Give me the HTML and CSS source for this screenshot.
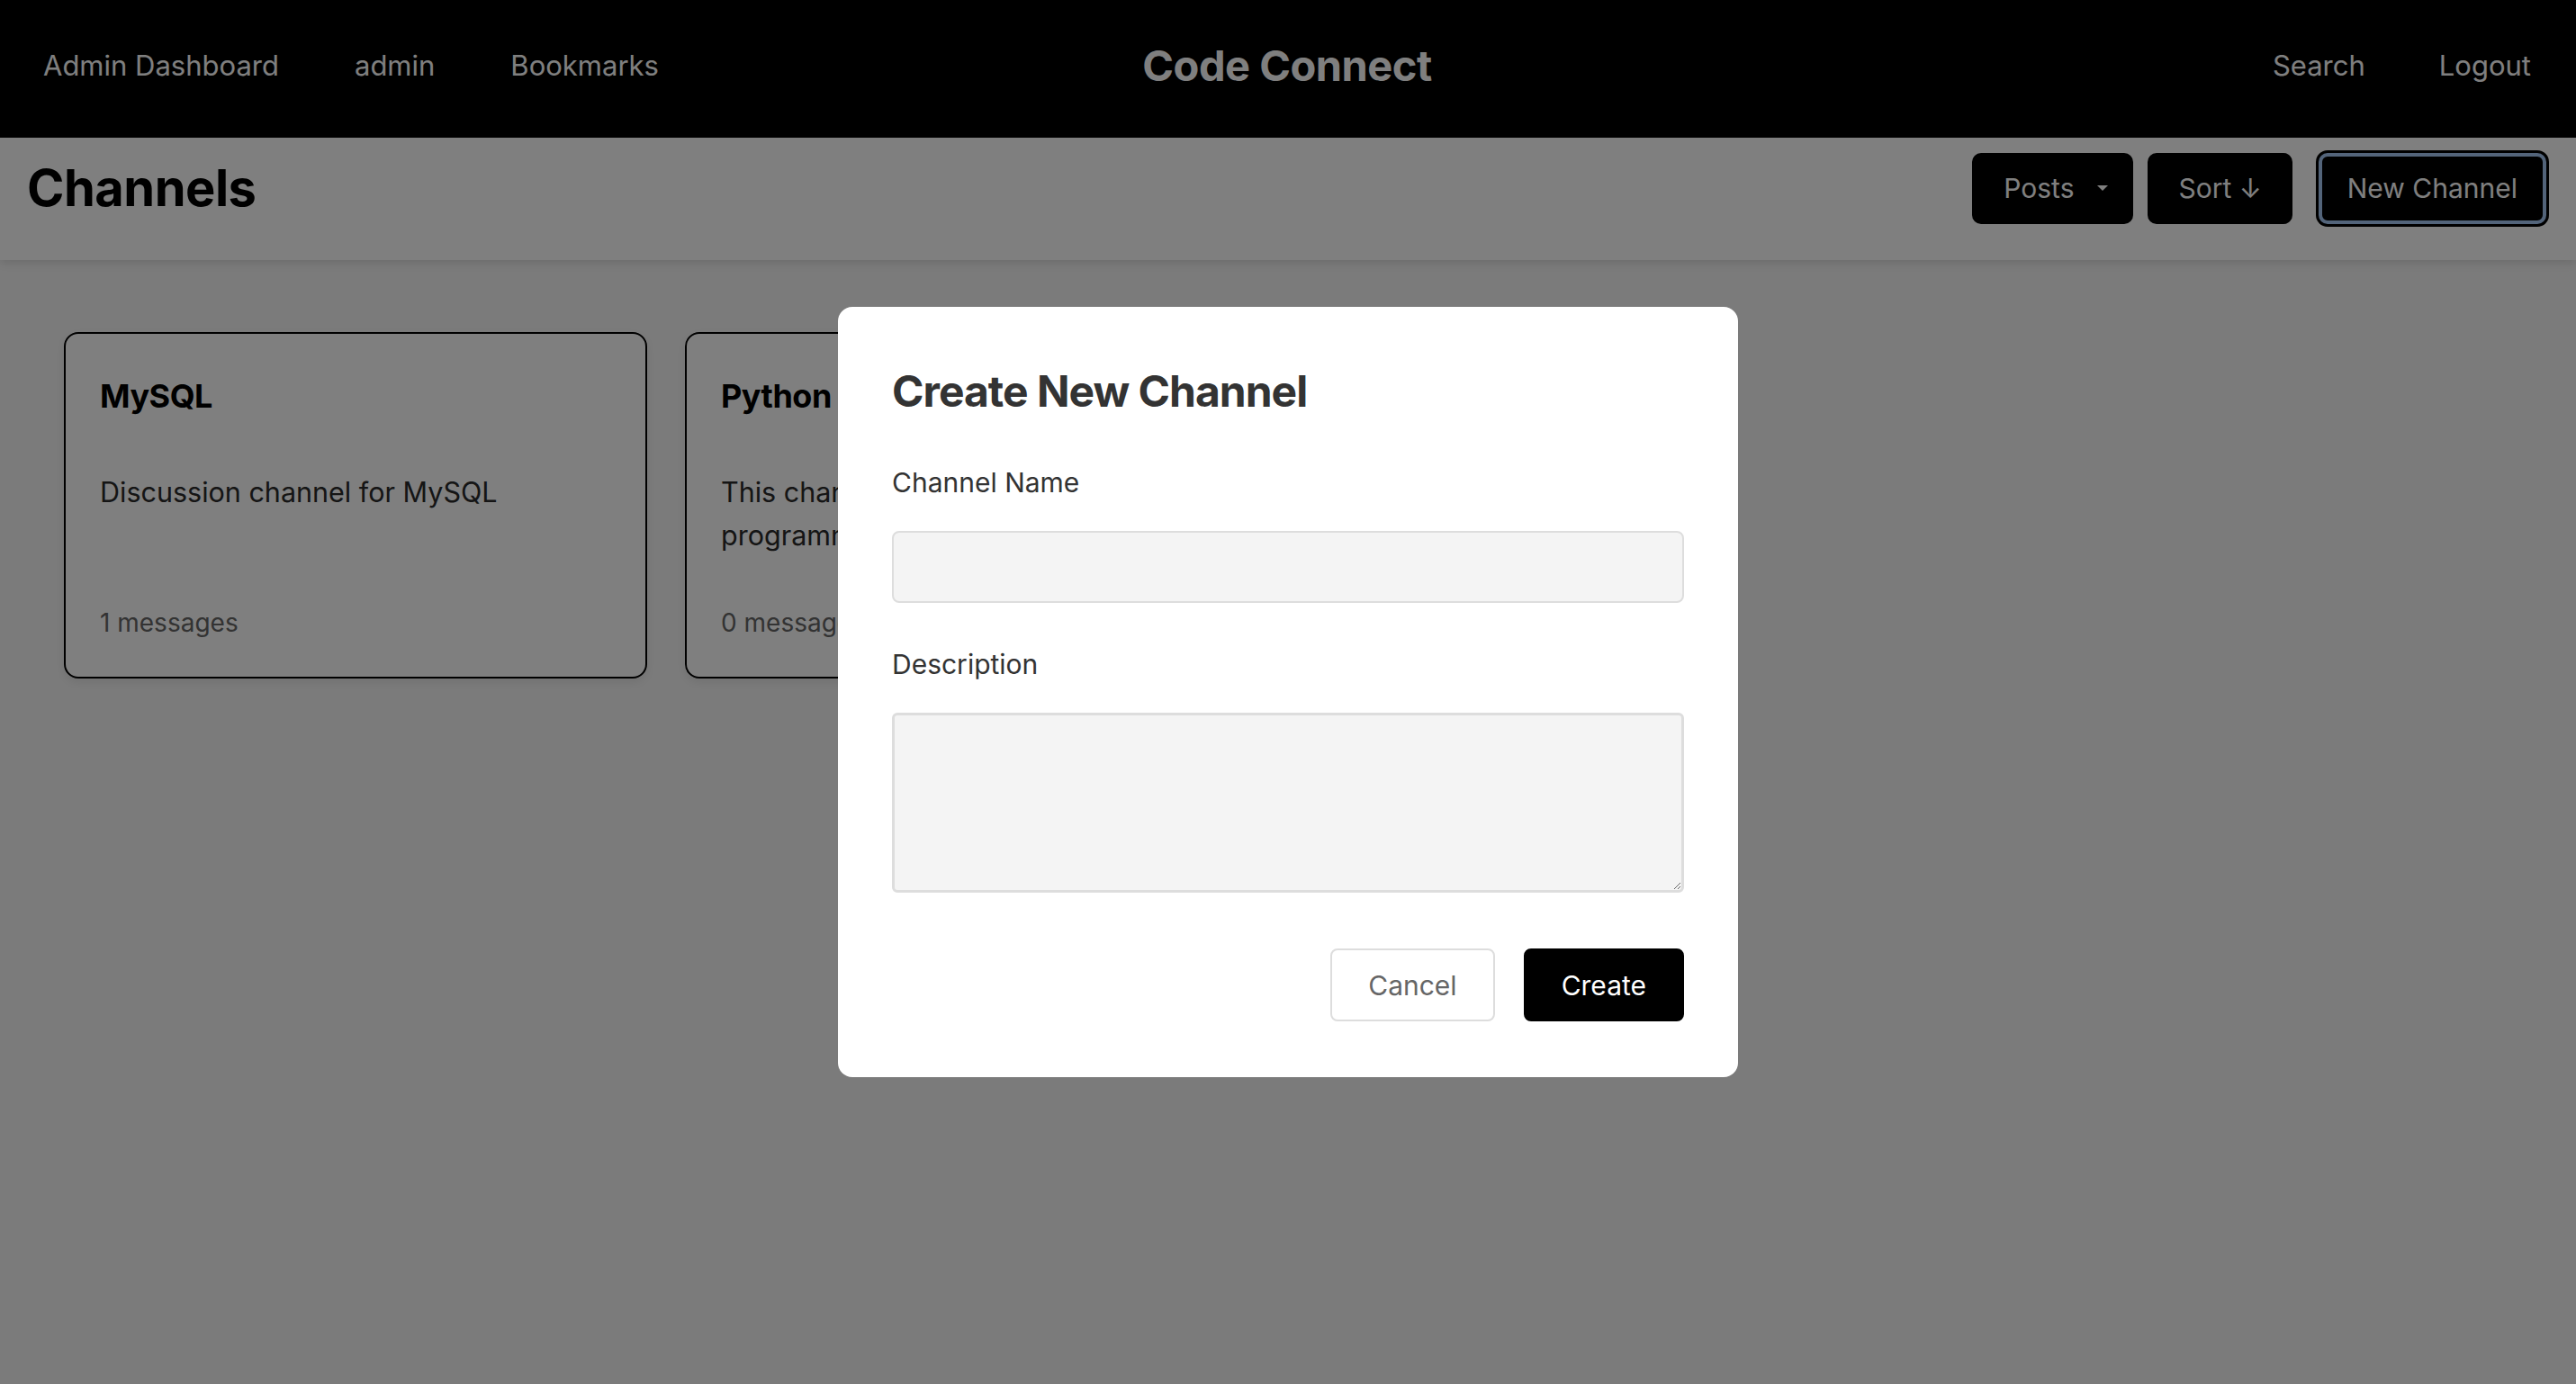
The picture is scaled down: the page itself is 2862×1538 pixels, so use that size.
FILE: index.html
```html
<!DOCTYPE html>
<html lang="en">
<head>
<meta charset="utf-8">
<title>Code Connect - Channels</title>
<link rel="stylesheet" href="styles.css">
</head>
<body>
<nav class="navbar">
  <div class="nav-left">
    <a class="nav-link" href="#">Admin Dashboard</a>
    <a class="nav-link" href="#">admin</a>
    <a class="nav-link" href="#">Bookmarks</a>
  </div>
  <div class="brand">Code Connect</div>
  <div class="nav-right">
    <a class="nav-link" href="#">Search</a>
    <a class="nav-link" href="#">Logout</a>
  </div>
</nav>

<header class="page-header">
  <h1 class="page-title">Channels</h1>
  <div class="header-actions">
    <button class="btn-dark btn-posts">Posts<span class="caret"></span></button>
    <button class="btn-dark">Sort ↓</button>
    <button class="btn-dark btn-focus">New Channel</button>
  </div>
</header>

<main class="channel-list">
  <div class="card">
    <h3 class="card-title">MySQL</h3>
    <p class="card-desc">Discussion channel for MySQL</p>
    <div class="card-meta">1 messages</div>
  </div>
  <div class="card">
    <h3 class="card-title">Python</h3>
    <p class="card-desc">This channel is dedicated to Python programming discussions</p>
    <div class="card-meta">0 messages</div>
  </div>
</main>

<div class="overlay">
  <div class="modal">
    <h2 class="modal-title">Create New Channel</h2>
    <div class="form-group">
      <label class="form-label">Channel Name</label>
      <input class="form-input" type="text">
    </div>
    <div class="form-group">
      <label class="form-label">Description</label>
      <textarea class="form-textarea"></textarea>
    </div>
    <div class="modal-actions">
      <button class="btn-cancel">Cancel</button>
      <button class="btn-create">Create</button>
    </div>
  </div>
</div>
</body>
</html>
```

FILE: styles.css
```css
* { box-sizing: border-box; }

html, body {
  margin: 0;
  padding: 0;
}

body {
  font-family: Inter, "Liberation Sans", Arial, sans-serif;
  background: #f6f6f6;
  min-height: 100vh;
  color: #333;
}

/* Navbar */
.navbar {
  height: 153px;
  background: #000;
  display: grid;
  grid-template-columns: 1fr auto 1fr;
  align-items: center;
  padding: 0 50px 9px 48px;
}

.nav-left {
  display: flex;
  gap: 84px;
}

.nav-right {
  display: flex;
  justify-content: flex-end;
  gap: 82px;
}

.nav-link {
  color: #fff;
  text-decoration: none;
  font-size: 31px;
}

.brand {
  color: #fff;
  font-weight: 700;
  font-size: 47px;
  letter-spacing: -0.5px;
}

/* Header */
.page-header {
  height: 136px;
  background: #fff;
  display: flex;
  align-items: center;
  justify-content: space-between;
  padding: 0 33px 24px 30px;
  box-shadow: 0 3px 10px rgba(0, 0, 0, 0.12);
  position: relative;
}

.page-title {
  margin: 0;
  font-size: 56px;
  font-weight: 700;
  color: #000;
  letter-spacing: -0.5px;
}

.header-actions {
  display: flex;
  align-items: center;
  gap: 16px;
}

.btn-dark {
  height: 79px;
  background: #000;
  color: #fff;
  border: none;
  border-radius: 10px;
  padding: 0 34px;
  font-family: inherit;
  font-size: 30px;
  display: flex;
  align-items: center;
}

.btn-posts {
  padding: 0 28px 0 35px;
}

.caret {
  width: 0;
  height: 0;
  margin-left: 26px;
  border-left: 6px solid transparent;
  border-right: 6px solid transparent;
  border-top: 6px solid #fff;
}

.btn-focus {
  margin-left: 13px;
  padding: 0 32px;
  box-shadow: inset 0 0 0 4px #a6c8f5, 0 0 0 3px #000;
}

/* Channel cards */
.channel-list {
  display: flex;
  gap: 42px;
  padding: 80px 71px;
  align-items: stretch;
}

.card {
  width: 648px;
  background: #fff;
  border: 2px solid #000;
  border-radius: 16px;
  padding: 40px 38px;
  display: flex;
  flex-direction: column;
  box-shadow: 0 4px 10px rgba(0, 0, 0, 0.08);
}

.card-title {
  margin: 8px 0 0;
  font-size: 36px;
  line-height: 1.2;
  font-weight: 700;
  color: #000;
  letter-spacing: -0.5px;
}

.card-desc {
  margin: 61px 0 53px;
  font-size: 30.5px;
  line-height: 48px;
  color: #2a2a2a;
}

.card-meta {
  margin-top: auto;
  font-size: 28px;
  line-height: 40px;
  color: #666;
}

/* Modal */
.overlay {
  position: fixed;
  inset: 0;
  background: rgba(0, 0, 0, 0.5);
  display: flex;
  align-items: center;
  justify-content: center;
}

.modal {
  width: 1000px;
  background: #fff;
  border-radius: 16px;
  padding: 60px 60px 62px;
}

.modal-title {
  margin: 5px 0 50px;
  font-size: 48px;
  line-height: 58px;
  font-weight: 700;
  color: #333;
  letter-spacing: -1px;
}

.form-group {
  margin-bottom: 46px;
}

.form-label {
  display: block;
  font-size: 30px;
  line-height: 44px;
  color: #333;
  margin-bottom: 32px;
}

.form-input {
  display: block;
  width: 100%;
  height: 80px;
  background: #f4f4f4;
  border: 2px solid #ddd;
  border-radius: 8px;
  font-family: inherit;
  font-size: 30px;
  padding: 0 20px;
}

.form-textarea {
  display: block;
  width: 100%;
  height: 200px;
  background: #f4f4f4;
  border: 3px solid #ddd;
  border-radius: 6px;
  font-family: inherit;
  font-size: 30px;
  padding: 16px 20px;
}

.modal-actions {
  display: flex;
  justify-content: flex-end;
  gap: 32px;
  margin-top: 62px;
}

.btn-cancel,
.btn-create {
  height: 81px;
  padding: 0 40px;
  border-radius: 8px;
  font-family: inherit;
  font-size: 30px;
}

.btn-cancel {
  background: #fff;
  color: #666;
  border: 2px solid #ddd;
}

.btn-create {
  background: #000;
  color: #fff;
  border: 2px solid #000;
}
```
